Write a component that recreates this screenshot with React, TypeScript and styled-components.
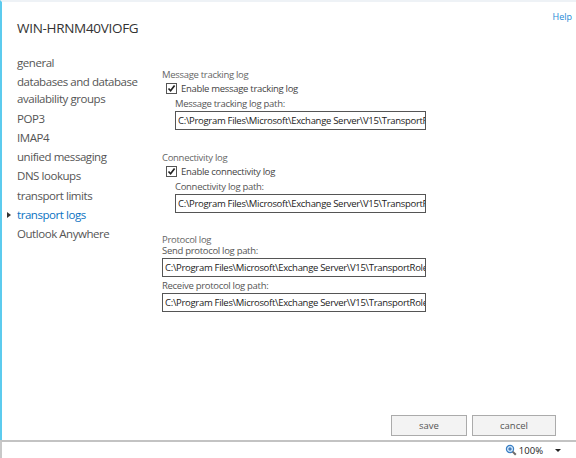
import React from "react";
import styled, { createGlobalStyle } from "styled-components";

const Global = createGlobalStyle`
  html, body { margin: 0; padding: 0; background: #fff; }
  body { font-family: "Open Sans", "Noto Sans", sans-serif; color: #444; }
  #root { width: 576px; height: 458px; }
`;

const Page = styled.div`
  display: flex;
  flex-direction: column;
  width: 576px;
  height: 458px;
  box-sizing: border-box;
`;

const Window = styled.div`
  flex: 1;
  display: flex;
  flex-direction: column;
  border-left: 2px solid #5ccbee;
  border-top: 2px solid #eef2f6;
  box-sizing: border-box;
  min-height: 0;
`;

const Header = styled.div`
  display: flex;
  justify-content: space-between;
  align-items: flex-start;
  padding: 0 4px 0 15px;
`;

const Title = styled.h1`
  margin: 16px 0 0;
  font-size: 13.5px;
  line-height: 20px;
  font-weight: 400;
  letter-spacing: -0.3px;
  color: #333;
`;

const HelpLink = styled.a`
  margin-top: 8px;
  font-size: 9px;
  color: #1f8ad6;
  text-decoration: none;
`;

const Body = styled.div`
  display: grid;
  grid-template-columns: 160px 1fr;
  padding-top: 16px;
  flex: 1;
`;

const Nav = styled.ul`
  list-style: none;
  margin: 0;
  padding: 0 0 0 15px;
  display: flex;
  flex-direction: column;
  gap: 2.3px;
`;

const NavItem = styled.li<{ $active?: boolean }>`
  position: relative;
  font-size: 11.5px;
  line-height: 17px;
  letter-spacing: -0.45px;
  color: ${(p) => (p.$active ? "#0a72c2" : "#555")};
`;

const Caret = styled.span`
  position: absolute;
  left: -10px;
  top: 6px;
  width: 0;
  height: 0;
  border-top: 3px solid transparent;
  border-bottom: 3px solid transparent;
  border-left: 4px solid #333;
`;

const Content = styled.div`
  display: flex;
  flex-direction: column;
  padding-top: 14px;
  width: 264px;
`;

const Section = styled.section<{ $space?: number }>`
  display: flex;
  flex-direction: column;
  margin-bottom: ${(p) => p.$space ?? 0}px;
`;

const SectionLabel = styled.div<{ $compact?: boolean }>`
  font-size: 9.5px;
  line-height: ${(p) => (p.$compact ? 11 : 13)}px;
  letter-spacing: -0.3px;
  color: #666;
`;

const CheckRow = styled.label`
  display: flex;
  align-items: center;
  gap: 4px;
  margin: 1px 0 0 4px;
  font-size: 9.5px;
  line-height: 13px;
  letter-spacing: -0.3px;
  color: #444;
`;

const Box = styled.span`
  width: 9px;
  height: 9px;
  border: 1px solid #555;
  background: #fff;
  display: inline-flex;
  align-items: center;
  justify-content: center;
`;

const Field = styled.div<{ $indent?: boolean }>`
  display: flex;
  flex-direction: column;
  padding-left: ${(p) => (p.$indent ? 13 : 0)}px;
`;

const FieldLabel = styled.div<{ $tight?: boolean }>`
  font-size: 9.5px;
  line-height: ${(p) => (p.$tight ? 11 : 13)}px;
  letter-spacing: -0.3px;
  margin: ${(p) => (p.$tight ? "0 0 2px" : "2px 0 1px")};
  color: #555;
`;

const PathBox = styled.div`
  height: 19px;
  box-sizing: border-box;
  border: 1px solid #555;
  background: #fff;
  padding: 0 2px;
  font-size: 9.5px;
  line-height: 17px;
  color: #222;
  white-space: nowrap;
  overflow: hidden;
  letter-spacing: -0.3px;
`;

const Actions = styled.div`
  display: flex;
  justify-content: flex-end;
  gap: 5px;
  padding: 0 20px 4px 0;
`;

const Button = styled.button<{ $w: number }>`
  width: ${(p) => p.$w}px;
  height: 21px;
  border: 1px solid #ababab;
  background: #f3f3f3;
  color: #555;
  font-family: inherit;
  font-size: 9.5px;
  padding: 0;
`;

const StatusBar = styled.div`
  height: 16px;
  border-top: 2px solid #c3c3c3;
  border-left: 2px solid #c8c8c8;
  display: flex;
  justify-content: flex-end;
  align-items: center;
  gap: 12px;
  padding-right: 15px;
  font-size: 9.5px;
  color: #222;
`;

const Zoom = styled.span`
  display: inline-flex;
  align-items: center;
  gap: 2px;
`;

const Drop = styled.span`
  width: 0;
  height: 0;
  border-left: 3px solid transparent;
  border-right: 3px solid transparent;
  border-top: 3px solid #222;
`;

const Check = () => (
  <Box>
    <svg width="9" height="9" viewBox="0 0 9 9">
      <path d="M1.5 4.5 L3.6 6.8 L7.6 1.6" stroke="#222" strokeWidth="1.7" fill="none" />
    </svg>
  </Box>
);

const Magnifier = () => (
  <svg width="12" height="12" viewBox="0 0 12 12">
    <circle cx="5" cy="5" r="3.6" fill="#cfe6fb" stroke="#3a7fc4" strokeWidth="1.2" />
    <path d="M3.2 5 H6.8 M5 3.2 V6.8" stroke="#1f5fa8" strokeWidth="1.1" />
    <path d="M7.6 7.6 L10.8 10.8" stroke="#6b6b6b" strokeWidth="2" />
  </svg>
);

const nav = [
  "general",
  "databases and database availability groups",
  "POP3",
  "IMAP4",
  "unified messaging",
  "DNS lookups",
  "transport limits",
  "transport logs",
  "Outlook Anywhere",
];

const base = "C:\\Program Files\\Microsoft\\Exchange Server\\V15\\";

export default function App() {
  return (
    <>
      <Global />
      <Page>
        <Window>
          <Header>
            <Title>WIN-HRNM40VIOFG</Title>
            <HelpLink href="#">Help</HelpLink>
          </Header>
          <Body>
            <Nav>
              {nav.map((n) => (
                <NavItem key={n} $active={n === "transport logs"}>
                  {n === "transport logs" && <Caret />}
                  {n === "databases and database availability groups" ? (
                    <>
                      databases and database
                      <br />
                      availability groups
                    </>
                  ) : (
                    n
                  )}
                </NavItem>
              ))}
            </Nav>
            <Content>
              <Section $space={21}>
                <SectionLabel>Message tracking log</SectionLabel>
                <CheckRow>
                  <Check />
                  Enable message tracking log
                </CheckRow>
                <Field $indent>
                  <FieldLabel>Message tracking log path:</FieldLabel>
                  <PathBox>{base + "TransportRoles\\Logs\\MessageTracking"}</PathBox>
                </Field>
              </Section>
              <Section $space={21}>
                <SectionLabel>Connectivity log</SectionLabel>
                <CheckRow>
                  <Check />
                  Enable connectivity log
                </CheckRow>
                <Field $indent>
                  <FieldLabel>Connectivity log path:</FieldLabel>
                  <PathBox>{base + "TransportRoles\\Logs\\Hub\\Connectivity"}</PathBox>
                </Field>
              </Section>
              <Section>
                <SectionLabel $compact>Protocol log</SectionLabel>
                <Field>
                  <FieldLabel $tight>Send protocol log path:</FieldLabel>
                  <PathBox>{base + "TransportRoles\\Logs\\Hub\\ProtocolLog\\SmtpSend"}</PathBox>
                </Field>
                <Field>
                  <FieldLabel>Receive protocol log path:</FieldLabel>
                  <PathBox>{base + "TransportRoles\\Logs\\Hub\\ProtocolLog\\SmtpReceive"}</PathBox>
                </Field>
              </Section>
            </Content>
          </Body>
          <Actions>
            <Button $w={76}>save</Button>
            <Button $w={84}>cancel</Button>
          </Actions>
        </Window>
        <StatusBar>
          <Zoom>
            <Magnifier />
            100%
          </Zoom>
          <Drop />
        </StatusBar>
      </Page>
    </>
  );
}
